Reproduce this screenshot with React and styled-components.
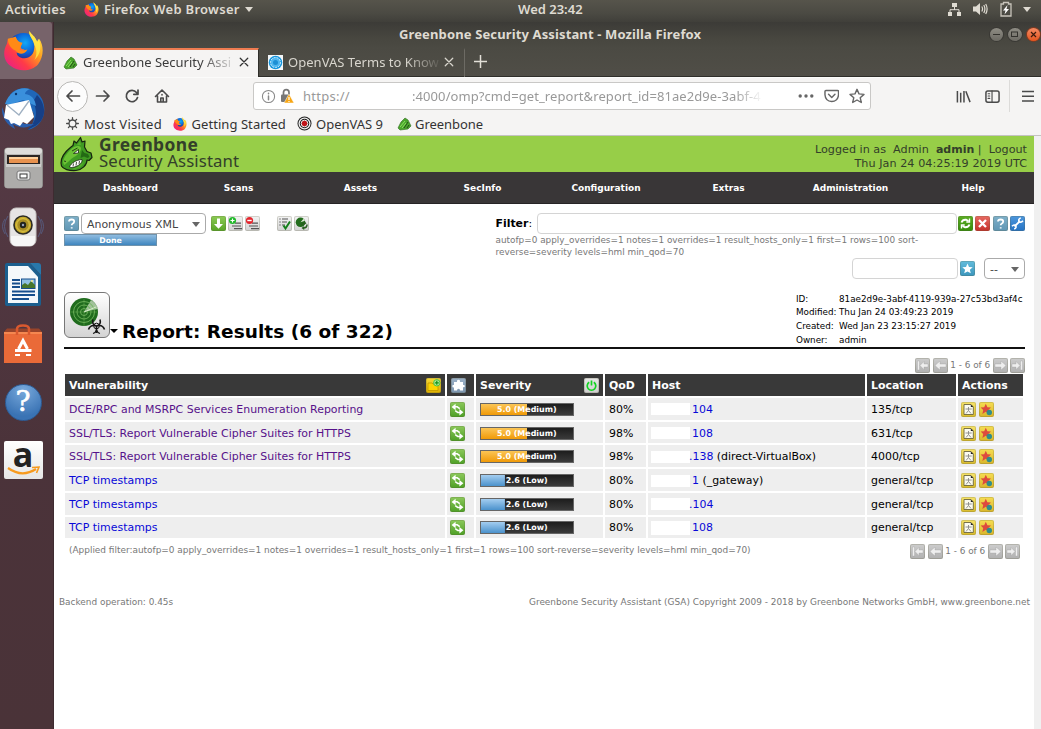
import React from 'react';
import styled, { createGlobalStyle } from 'styled-components';

const Global = createGlobalStyle`
  * { box-sizing: border-box; }
  body { margin: 0; background: #fff; font-family: "DejaVu Sans", sans-serif; overflow: hidden; }
  svg { display: block; flex: none; }
`;
const ui = '"Noto Sans", "Open Sans", sans-serif';

/* ---------- desktop shell ---------- */
const Desktop = styled.div`
  width: 1041px; height: 729px; display: flex; flex-direction: column; overflow: hidden;
`;
const TopBar = styled.header`
  height: 22px; flex: none; display: grid; grid-template-columns: 518px 1fr auto;
  background: linear-gradient(#56544b, #4b4a43 60%, #403f3a);
  color: #dfdbd2; font: 600 13px/18px ${ui}; padding-right: 10px; overflow: hidden;
`;
const TopLeft = styled.div`display: flex; padding-left: 5px; letter-spacing: 0.29px; white-space: nowrap;`;
const AppMenu = styled.div`display: flex; margin-left: 18px; gap: 5px; svg { margin-top: 2px; }`;
const Caret = styled.i`
  width: 0; height: 0; border: ${p => p.$s || 4}px solid transparent; border-bottom: 0;
  border-top: ${p => p.$h || 5}px solid ${p => p.$c || '#dfdbd2'}; flex: none; margin-top: ${p => p.$mt || 0}px;
`;
const Tray = styled.div`display: flex; align-items: flex-start; svg { margin-top: 1px; }`;
const TrayIcon = styled.span`display: block; margin-right: ${p => p.$r}px;`;
const Workspace = styled.div`flex: 1; display: flex; min-height: 0;`;
const Launcher = styled.nav`
  width: 54px; flex: none; display: flex; flex-direction: column; align-items: center; padding-right: 7px;
  background: linear-gradient(#523c43, #543944 20%, #4b333a 60%, #4a3338); border-right: 1px solid #3e2b30;
`;
const LaunchItem = styled.div`
  height: ${p => p.$h || 58.6}px; width: 100%; flex: none; display: flex; align-items: center; justify-content: center;
`;
const ActiveItem = styled(LaunchItem)`
  width: 52px; margin-right: -6px; padding-right: 5px; background: #77636a; border-radius: 0 3px 3px 0;
`;

/* ---------- browser window ---------- */
const Browser = styled.main`flex: 1; min-width: 0; display: flex; flex-direction: column; background: #fff;`;
const TitleBar = styled.div`
  height: 26px; flex: none; background: linear-gradient(#3c3b37, #47463f 60%, #4b4a43);
  display: grid; grid-template-columns: 345px 1fr auto; color: #dfdbd2;
  font: 700 13px/24px ${ui}; letter-spacing: 0.13px; white-space: nowrap;
`;
const WindowButtons = styled.div`display: flex; gap: 3px; padding-top: 5px;`;
const WinBtn = styled.span`
  width: 15.4px; height: 15px; border-radius: 50%; border: 1px solid ${p => (p.$close ? '#7d3b22' : '#3a3935')};
  background: ${p => (p.$close ? 'linear-gradient(#f58a63,#e4551f)' : 'linear-gradient(#8e8c84,#6c6a63)')};
  display: flex; align-items: center; justify-content: center;
`;
const TabStrip = styled.div`
  height: 29px; flex: none; display: flex; background: linear-gradient(#4b4a43, #504e47);
  border-bottom: 1px solid #2f2e2a; font: 400 13px/28px ${ui};
`;
const Tab = styled.div`
  width: ${p => (p.$active ? 205 : 206)}px; height: 29px; display: flex; align-items: center; padding: 0 9px 3px 9px;
  color: ${p => (p.$active ? '#3b3b3b' : '#d9d6ce')};
  background: ${p => (p.$active ? '#f5f4f3' : 'transparent')};
  border-top: 2px solid ${p => (p.$active ? '#ef7c51' : 'transparent')};
  border-right: 1px solid ${p => (p.$active ? '#2f2e2a' : '#6d6b64')};
`;
const TabTitle = styled.span`
  width: 155px; flex: none; margin-left: ${p => p.$ml}px; white-space: nowrap; letter-spacing: ${p => p.$ls || 0}px;
  mask-image: linear-gradient(90deg, #000 76%, transparent 100%);
`;
const NewTab = styled.div`padding: 7px 0 0 9px;`;
const NavBar = styled.div`
  height: 36px; flex: none; display: flex; align-items: center; background: #f5f4f3; border-top: 1px solid #fbfbfa; padding: 1px 7px 0 3px;
`;
const BackButton = styled.span`
  width: 31px; height: 31px; border: 1px solid #b9b8b6; border-radius: 50%; background: #fcfcfc; display: flex; align-items: center; justify-content: center;
`;
const NavIcons = styled.div`display: flex; align-items: center; gap: 13.4px; padding-left: 7px; width: 165px;`;
const UrlBar = styled.div`
  width: 618px; height: 28px; display: flex; align-items: center; background: #fff; border: 1px solid #c9c8c6; border-radius: 3px;
  color: #999; font: 400 13px/26px ${ui}; padding: 0 5px 0 7px; white-space: nowrap;
`;
const LockIcon = styled.span`margin-left: 2px;`;
const Scheme = styled.span`width: 109px; margin-left: 8px; letter-spacing: 0.27px;`;
const Path = styled.span`
  width: 351px; flex: none; letter-spacing: 0.08px; mask-image: linear-gradient(90deg, #000 92%, transparent 100%);
`;
const UrlActions = styled.div`display: flex; align-items: center; gap: 10px; margin-left: auto;`;
const RightTools = styled.div`display: flex; align-items: center; margin-left: auto; height: 100%;`;
const ToolGap = styled.span`width: 14px;`;
const ToolDivider = styled.span`width: 1px; height: 32px; background: #dcdbd9; margin: 0 12px 0 9px;`;
const Bookmarks = styled.div`
  height: 23px; flex: none; display: flex; background: #f5f4f3; border-bottom: 1px solid #c4c3c0; padding-left: 12px;
  font: 400 13px/20px ${ui}; color: #333; white-space: nowrap;
`;
const Bookmark = styled.div`display: flex; align-items: center; gap: ${p => p.$g || 4}px; width: ${p => p.$w}px; letter-spacing: ${p => p.$ls || 0}px; height: 21px;`;

/* ---------- Greenbone page ---------- */
const Viewport = styled.section`flex: 1; min-height: 0; display: flex;`;
const Page = styled.div`width: 980px; flex: none; background: #fff; color: #000; font-size: 10.9px;`;
const ScrollTrack = styled.div`flex: 1; background: #f0f0f0;`;
const Banner = styled.div`height: 36px; display: flex; background: #97ce48; padding: 0 7px 0 6px;`;
const Brand = styled.div`font-family: "Noto Sans", sans-serif; color: #33402a; margin-left: 5px; line-height: 17px; white-space: nowrap;`;
const BrandName = styled.div`font-size: 17.4px; font-weight: 700; letter-spacing: .4px; height: 16px; line-height: 16px;`;
const BrandSub = styled.div`font-size: 16.8px; letter-spacing: .1px;`;
const Session = styled.div`margin-left: auto; text-align: right; font-size: 11.2px; line-height: 14px; padding-top: 7px; color: #33402a; white-space: pre;`;
const LoginLine = styled.div`b { font-size: 11px; }`;
const Clock = styled.div`letter-spacing: .05px;`;
const Menu = styled.nav`
  height: 32px; display: flex; background: #393637; color: #fff; font: 700 9px/32px "DejaVu Sans", sans-serif; padding: 0 0 0 15px; border-bottom: 1px solid #262425;
`;
const MenuItem = styled.span`width: ${p => p.$w}px; text-align: center; padding-left: 1px;`;
const Body = styled.div`padding: 9px 9px 0 10px;`;
const Controls = styled.div`display: flex; height: 86px; align-items: flex-start;`;
const LeftControls = styled.div`width: 431.5px;`;
const IconRow = styled.div`display: flex; align-items: center; height: 21px;`;
const Select = styled.div`
  width: ${p => p.$w}px; height: 21px; border: 1px solid #aaa; border-radius: 4px; background: #fff; color: #444;
  display: flex; align-items: center; justify-content: space-between; padding: 1px 5px 0; margin: 0 ${p => p.$mr || 0}px 0 ${p => p.$ml}px; font-size: 10.95px;
`;
const IconGap = styled.span`width: ${p => p.$w}px;`;
const Done = styled.div`
  width: 93px; height: 12px; border: 1px solid #6f93ad; background: linear-gradient(#8fbce0, #3f86bf);
  color: #fff; font: 700 7.8px/11px "DejaVu Sans", sans-serif; text-align: center;
`;
const FilterPanel = styled.div`flex: 1;`;
const FilterLabel = styled.span`font-size: 10.9px; width: 41px; flex: none; b { font-size: 10.9px; }`;
const Input = styled.div`width: ${p => p.$w}px; height: 21px; flex: none; border: 1px solid #d4d4d4; border-radius: 4px; background: #fff; margin-right: ${p => p.$mr || 1}px;`;
const FilterText = styled.div`font-size: 8.9px; line-height: 12px; color: #777; height: 24px; white-space: nowrap;`;
const SavedFilters = styled(IconRow)`justify-content: flex-end;`;
const TitleRow = styled.div`display: flex; height: 57px; align-items: flex-start; border-bottom: 2px solid #111; margin-top: -7px;`;
const TitleBox = styled.div`display: flex; align-items: flex-end; flex: 1;`;
const ReportBadge = styled.div`
  width: 46px; height: 46px; border: 1px solid #777; border-radius: 6px; background: linear-gradient(#fff, #d4d4d4); padding: 2px;
`;
const CaretSlot = styled.span`padding-bottom: 5px;`;
const Heading = styled.h1`margin: 0 0 -5px 4px; font: 700 18.5px/22px "DejaVu Sans", sans-serif; letter-spacing: .03px;`;
const Meta = styled.dl`
  margin: 0; width: 229px; display: grid; grid-template-columns: 43px 1fr; font-size: 8.8px; line-height: 13.7px; white-space: nowrap; padding-top: .5px;
  dd, dt { margin: 0; }
`;
const Pager = styled.div`display: flex; align-items: center; justify-content: flex-end; gap: 2.4px; font-size: 8.9px; color: #777; white-space: nowrap; margin-right: ${p => p.$r || 0}px; height: 16px;`;
const TopPager = styled.div`padding-top: 8px;`;
const Grid = styled.div`
  display: grid; grid-template-columns: 380px 27px 127px 41px 217px 89px 65px; column-gap: 2px; row-gap: 2px; margin: 1px 0 0 1px;
  grid-template-rows: 22px; grid-auto-rows: 21.73px;
`;
const Head = styled.div`
  background: #393939; color: #fff; font-weight: 700; font-size: 10.95px; display: flex; align-items: center; justify-content: space-between; padding: 0 4px;
`;
const Cell = styled.div`
  background: #eee; display: flex; align-items: center; padding: 1px ${p => (p.$icon ? 3 : 4)}px 0; font-size: 10.95px; white-space: pre; gap: 2px; min-width: 0;
`;
const Link = styled.a`color: ${p => (p.$visited ? '#56118a' : '#0808d8')};`;
const Redacted = styled.span`width: 39px; height: ${p => p.$h || 12}px; background: #fff; margin-right: ${p => p.$r}px; margin-left: -1px;`;
const Bar = styled.div`
  width: 93.5px; height: 13px; border: 1px solid #666; color: #fff; font: 700 7.95px/12px "DejaVu Sans", sans-serif; text-align: center;
  background: ${p => (p.$low ? 'linear-gradient(#a3cdf0, #4b92cc)' : 'linear-gradient(#fbc556, #f09a08)')} 0 0 / ${p => (p.$low ? '26%' : '50%')} 100% no-repeat,
    linear-gradient(#1d1d1d, #3a3a3a);
`;
const Below = styled.div`display: flex; justify-content: space-between; font-size: 8.93px; color: #777; padding: 5px 0 0 5px; height: 58px; line-height: 15px; white-space: nowrap;`;
const Footer = styled.footer`display: flex; justify-content: space-between; padding: 0 4px 0 5px; font-size: 8.93px; color: #777; line-height: 13px; white-space: nowrap;`;

/* ---------- drawings ---------- */
const Firefox = ({ s }) => (
  <svg width={s} height={s} viewBox="0 0 42 42">
    <defs>
      <linearGradient id="fx" x1="1" y1="0" x2="0" y2="1"><stop offset="0" stopColor="#fff44a" /><stop offset=".38" stopColor="#ff9b1e" /><stop offset=".65" stopColor="#ff3b47" /><stop offset="1" stopColor="#e3169a" /></linearGradient>
      <radialGradient id="fb" cx=".55" cy=".3"><stop offset="0" stopColor="#12a9f5" /><stop offset=".6" stopColor="#0a63d8" /><stop offset="1" stopColor="#2b2d8a" /></radialGradient>
    </defs>
    <circle cx="21" cy="20" r="17" fill="url(#fb)" />
    <path fill="url(#fx)" d="M27 1C26 6 31 9 32 15C33 24 28 29 22 29C17 29 14 26 14 23C17 24 20 23 22 20C18 20 17 17 19 14C16 13 14 11 13 7C11 8 10 9 9 11L5 9L4 14C-1 23 1 32 8 37C17 44 30 42 36 35C42 27 42 16 37 9L35 12C33 6 29 5 27 1Z" />
    <path fill="#fff04a" opacity=".75" d="M27 1C26 6 31 9 32 15C35 20 35 26 32 31C39 25 40 15 36 9L35 12C33 6 29 5 27 1Z" />
    <path fill="#ff8a16" d="M5 9L13 7C14 11 17 13 20 13L17 20C20 22 23 20 25 20C22 26 15 25 13 21C9 20 5 15 5 9Z" />
  </svg>
);
const Thunderbird = () => (
  <svg width="45" height="44" viewBox="0 0 45 44">
    <path fill="#1f66b8" d="M9 8C16-2 34-1 41 12C47 26 41 39 27 43C33 36 34 31 32 25L10 18Z" />
    <path fill="#163f86" d="M36 8C46 18 46 34 32 40L26 43C36 35 37 24 32 15Z" />
    <path fill="#3a90dc" d="M4 17C8 4 20-1 29 2C26 3 24 5 24 7C31 8 34 12 35 19L22 13L8 18Z" />
    <path fill="#2a5fae" d="M1 20C0 30 6 38 14 42L12 37C18 41 26 42 33 37L24 37L5 30Z" />
    <path fill="#fff" d="M5 18L28 13L33 30L26 37L22 35L19 39L13 36L10 37L8 33L3 31Z" />
    <path d="M6 18L18 28L28 14" fill="none" stroke="#9fb0c2" strokeWidth="1.300" />
    <circle cx="15" cy="7" r="1.200" fill="#0b376f" />
  </svg>
);
const Files = () => (
  <svg width="39" height="42" viewBox="0 0 39 42">
    <rect x=".5" y="1" width="38" height="40" rx="3" fill="#b9b8b6" stroke="#8e8c8a" />
    <rect x="1" y="1" width="37" height="6" rx="3" fill="#dddcda" />
    <path fill="#2b2523" d="M3 8H36V18H3Z" /><path fill="#e8924f" d="M5 11H34V16H5Z" /><path fill="#fdd09c" d="M5 10H34V12H5Z" />
    <rect x="1" y="17" width="37" height="24" rx="2" fill="#adacaa" /><path fill="#cfcecc" d="M2 17H37V20H2Z" />
    <rect x="13" y="24" width="13" height="9" rx="2" fill="#eee" stroke="#777" /><rect x="16" y="27" width="7" height="4" fill="#fff" stroke="#333" />
  </svg>
);
const Speaker = () => (
  <svg width="44" height="42" viewBox="0 0 44 42">
    <path d="M7 10Q0 20 7 31M37 10Q44 20 37 31M4 13Q-1 20 4 28M40 13Q45 20 40 28" fill="none" stroke="#575a7c" strokeWidth="1" />
    <rect x="9" y="2" width="26" height="38" rx="6" fill="#e6e4e4" stroke="#c9c6c5" /><path d="M10 30H34V34Q34 40 28 40H16Q10 40 10 34Z" fill="#f6f6f6" />
    <circle cx="22" cy="19" r="9.800" fill="#2b2b24" /><circle cx="22" cy="19" r="8.200" fill="#c7aa2b" /><circle cx="22" cy="19" r="6.300" fill="#a88d24" stroke="#dcc549" /><circle cx="22" cy="19" r="3.200" fill="#20221d" /><circle cx="22" cy="19" r="1.200" fill="#9aa5bd" />
  </svg>
);
const Writer = () => (
  <svg width="38" height="44" viewBox="0 0 38 44">
    <path fill="#1b5f8f" d="M3 0H26L37 12V41Q37 43 35 43H3Q1 43 1 41V2Q1 0 3 0Z" />
    <path fill="#f4f8fb" d="M4 3H24L34 14V40H4Z" /><path fill="#2878ab" d="M26 0L37 12V3Q37 0 34 0Z" />
    <path d="M8 17H16M8 20.500H16M8 24H16M8 28.500H31M8 32H31M8 36H25" stroke="#174f8d" strokeWidth="2" />
    <rect x="17.500" y="16" width="13.500" height="9.500" fill="#8fc0e2" stroke="#174f8d" /><path fill="#48762b" d="M18 25V22L21 20L24 22L27 18L31 22V25Z" /><circle cx="28" cy="18" r="1" fill="#ffe88a" />
  </svg>
);
const Software = () => (
  <svg width="40" height="40" viewBox="0 0 40 40">
    <path fill="#b84a22" d="M4 4.500H36L39 8V39H1V8Z" opacity=".7" /><path fill="#ea6a38" d="M1 8H39V39H1Z" /><path fill="#f58750" d="M1 8H39V10H1Z" />
    <path d="M14 11V5Q14 1.500 20 1.500Q26 1.500 26 5V11" fill="none" stroke="#d9592f" strokeWidth="2.500" />
    <path d="M15.500 25L20 16.500L24.500 25" fill="none" stroke="#fff" strokeWidth="3" /><path d="M12 26.500H28.500" stroke="#fff" strokeWidth="3" /><path d="M12 31H17M23 31H28" stroke="#fff" strokeWidth="2.200" />
  </svg>
);
const HelpBall = styled.span`
  width: 37px; height: 37px; border-radius: 50%; background: radial-gradient(circle at 50% 15%, #78a9dc, #3a73b4 75%); border: 1px solid #2d5d97;
  color: #fff; font: 400 28px/34px "DejaVu Serif", serif; text-align: center; -webkit-text-stroke: .6px #fff;
`;
const Amazon = styled.span`
  width: 39px; height: 38px; border-radius: 2px; background: linear-gradient(#fff, #e6e6e6); color: #222; display: flex; flex-direction: column; align-items: center;
  font: 700 34px/26px "Open Sans", sans-serif; svg { margin-top: -1px; }
`;
const Dragon = () => (
  <svg width="34" height="36" viewBox="0 0 34 36">
    <path fill="#3f9a22" stroke="#16240f" strokeWidth="1.200" strokeLinejoin="round" d="M1 27C1 21 6 15 11 11L13 9.500L14 5L16.500 7L20.500 1.500L22 6L25 5L24.500 11L27 15.500L31 17L32 21.500L29 24.500L27 24C27 29 22 34 16 34.500C9 35 3 33 1.500 30Z" />
    <path fill="#6cc234" d="M3 26C4 21 8 15 14 11C17 9.500 20 9.500 21 12C21 16 18 19 14 21C10 23 7 28 4 29Z" />
    <path fill="#57b02c" d="M20 5L21 9L17 9ZM12 33C17 33.500 22 31 24 26L18 31Z" />
    <path fill="#236a14" d="M22 14L24.500 17L28 18L29.500 21L27.500 22L24 20.500L20.500 22Z" />
    <path fill="#fff" stroke="#16240f" strokeWidth=".8" d="M9.500 31C11 27 16 24 22 23.500C22.500 26 20 29 16 30.500C13 31.800 11 32 9.500 31Z" />
    <path fill="#fff" stroke="#16240f" strokeWidth=".8" d="M13.500 17.500L18.500 13.500L18.500 17Z" />
    <path d="M13 30.500L13.500 27.500M16 29.500L16.500 26M19 28L19.500 25M4 25L6 25.500M12 15L17.500 12" stroke="#16240f" strokeWidth=".8" />
  </svg>
);
const SmallDragon = () => (
  <svg width="15" height="15" viewBox="0 0 15 15">
    <path fill="#4aa52c" stroke="#2f6a1c" strokeWidth=".6" d="M1 12L4 6L8 2L11 4L13 8L14 10L11 13L3 14Z" />
    <path d="M7 12L11 6M10 12L12 9" stroke="#1e4413" strokeWidth=".9" /><path d="M3 11L8 5M5 12L9 7" stroke="#8be05e" strokeWidth="1" />
  </svg>
);
const Stroke = ({ s = 16, w = 1.7, c = '#4a4a4a', cap = 'round', children }) => (
  <svg width={s} height={s} viewBox="0 0 16 16" fill="none" stroke={c} strokeWidth={w} strokeLinecap={cap} strokeLinejoin="round">{children}</svg>
);
const Close = ({ c }) => <Stroke s={12} w={1.7} c={c}><path d="M3 3L13 13M13 3L3 13" /></Stroke>;

const iconPaint = {
  help: ['#7fb0c9', '#5f96b4'], download: ['#8ccb55', '#58a426'], plain: ['#f4f4f4', '#d2d2d2'], refresh: ['#5cae25', '#348c0b'],
  remove: ['#e86b63', '#c4302a'], wrench: ['#4d97dc', '#2472c4'], star: ['#63bcdc', '#3b96bd'], grey: ['#cdcdcd', '#b0b0b0'],
  folder: ['#f7d838', '#dfb100'], puzzle: ['#9db2c8', '#7b94ae'], power: ['#e6e6e6', '#cfcfcf'], swap: ['#8cc95b', '#4d9f25'],
  note: ['#f6e36a', '#d9bb2c'], override: ['#f6dd52', '#d9b52a'],
};
const Chip = styled.span`
  width: 15px; height: 15px; flex: none; border-radius: 2px; margin-right: ${p => p.$r || 0}px;
  background: linear-gradient(${p => iconPaint[p.$k][0]}, ${p => iconPaint[p.$k][1]}); box-shadow: inset 0 0 0 1px rgba(90, 90, 60, .22);
`;
const art = {
  help: <path d="M5 5.600Q5 3.500 7.600 3.500Q10.200 3.500 10.200 5.500Q10.200 6.900 8.600 7.700Q7.700 8.200 7.700 9.300M7.700 11.300V12.500" stroke="#fff" strokeWidth="1.800" fill="none" />,
  download: <path fill="#fff" d="M6 2.500H9V8H12L7.500 12.800L3 8H6Z" />,
  add: <g><path d="M7 7.200H13M4 10H13M6 12.600H14" stroke="#555" strokeWidth="1.200" /><circle cx="4.500" cy="4.500" r="3.600" fill="#20b82a" /><path d="M4.500 2.500V6.500M2.500 4.500H6.500" stroke="#fff" strokeWidth="1.200" /></g>,
  sub: <g><path d="M7 7.200H13M4 10H13M6 12.600H14" stroke="#555" strokeWidth="1.200" /><circle cx="4.500" cy="4.500" r="3.600" fill="#e3262e" /><path d="M2.300 4.500H6.700" stroke="#fff" strokeWidth="1.400" /></g>,
  check: <g><path d="M5 3H11M5 6H10M5 9H8" stroke="#555" strokeWidth="1.200" /><path d="M2.500 3H3.500M2.500 6H3.500M2.500 9H3.500" stroke="#222" strokeWidth="1.200" /><path d="M6.500 9.500L8.500 12.500L13 5.500" stroke="#15801c" strokeWidth="2" fill="none" /></g>,
  scan: <g><circle cx="6.500" cy="6.300" r="4.800" fill="#236c1d" /><path fill="#e0ecd8" d="M6.500 6.300L9.500 2.800L11 4.800Z" /><path d="M7.500 9.500Q8 7 10.500 7.200M13 8.500Q13 12 9.500 12" stroke="#285f1f" strokeWidth="1.500" fill="none" /><path fill="#285f1f" d="M10 5.300L12.500 7.200L10 9ZM10.200 10L7.500 12L10.200 14Z" /></g>,
  refresh: <g fill="none" stroke="#fff" strokeWidth="1.900"><path d="M3.500 6.500Q4.500 3.400 8 3.700L10.500 5M11.500 8.500Q10.500 11.600 7 11.300L4.500 10" /><path d="M11.500 2.600V6H8.300M3.500 12.400V9H6.700" strokeWidth="1.400" /></g>,
  remove: <path d="M4 4L11 11M11 4L4 11" stroke="#fff" strokeWidth="2.300" />,
  wrench: <g fill="none" stroke="#fff"><path d="M4.500 10.500L10 5" strokeWidth="1.900" /><path d="M10.800 1.900Q8 3 9 5.300Q10.500 7.300 13 4.900M4.200 13Q6.800 12 5.800 9.800Q4.300 7.900 2 10.300" strokeWidth="1.500" /></g>,
  star: <path fill="#fff" d="M7.500 2.500L9 6L12.700 6.300L9.900 8.700L10.800 12.300L7.500 10.400L4.200 12.300L5.100 8.700L2.300 6.300L6 6Z" />,
  first: <path fill="#eee" stroke="#999" strokeWidth=".3" d="M2.500 3H4.500V12H2.500ZM5 7.500L9 3.500V6H13V9H9V11.500Z" />,
  prev: <path fill="#eee" stroke="#999" strokeWidth=".3" d="M2 7.500L7 3V6H13V9H7V12Z" />,
  next: <path fill="#eee" stroke="#999" strokeWidth=".3" d="M13 7.500L8 3V6H2V9H8V12Z" />,
  last: <path fill="#eee" stroke="#999" strokeWidth=".3" d="M12.500 3H10.500V12H12.500ZM10 7.500L6 3.500V6H2V9H6V11.500Z" />,
  folder: <g><path fill="#fdd400" stroke="#b98f00" strokeWidth=".7" d="M2 5H6L7 6H12V12.500H2Z" /><circle cx="10.800" cy="4.800" r="3.200" fill="#b5e89a" stroke="#2dbf35" strokeWidth=".8" /><path d="M10.800 2.800V6.800M8.800 4.800H12.800" stroke="#12931c" strokeWidth="1.200" /></g>,
  puzzle: <path fill="#fff" d="M3 4H6Q5.500 1.800 7.500 1.800Q9.500 1.800 9 4H12V7Q13.800 6.500 13.800 8Q13.800 9.700 12 9V12.500H9Q9.200 10.800 7.500 10.800Q6 10.800 6 12.500H3V9.500Q1.300 9.700 1.300 8Q1.300 6.500 3 7Z" />,
  power: <path d="M5.200 4.300A4.300 4.300 0 1 0 9.800 4.300M7.500 2.500V7.500" fill="none" stroke="#12d322" strokeWidth="1.700" />,
  swap: <g><path fill="#fff" d="M1.600 5L5.600 1.800V8.200ZM13.400 10.200L9.400 7V13.400Z" /><path d="M5 4.800H7.200L9.800 6.600M10 10.400H7.800L5.200 8.700" fill="none" stroke="#fff" strokeWidth="1.500" /></g>,
  note: <g><path fill="#fbfbef" stroke="#6b6540" strokeWidth=".9" d="M3 2.500H10L12.300 5V12.500H3Z" /><path d="M7.500 5V8.500L5 11.500M7.500 8.500L10 11.500M4.500 7H10.700" stroke="#888" strokeWidth=".9" fill="none" /><path fill="#222" d="M9.800 2.500L12.300 5H9.800Z" /></g>,
  override: <g><path fill="#dd4a3e" d="M6.800 1.800L8.400 5.300L12 5.600L9.400 8L10.200 12L6.800 9.800L3.400 12L4.200 8L1.600 5.600L5.200 5.300Z" /><circle cx="10.300" cy="10.500" r="2.700" fill="#2f8c8c" /></g>,
};
const GsaIcon = ({ k, paint, r }) => (
  <Chip $k={paint || k} $r={r}><svg width="15" height="15" viewBox="0 0 15 15">{art[k]}</svg></Chip>
);
const Radar = () => (
  <svg width="42" height="42" viewBox="0 0 42 42">
    <circle cx="17" cy="17" r="14" fill="#1f6b1d" />
    <path fill="#cfe0c6" opacity=".75" d="M17 17L24 5Q30 9 31 14Z" />
    <g fill="none" stroke="#6fb35b" strokeWidth=".9"><circle cx="17" cy="17" r="10.500" /><circle cx="17" cy="17" r="7" /><circle cx="17" cy="17" r="3.500" /><path d="M17 4V31M3 17H30" opacity=".5" /></g>
    <path d="M17 17L29 12" stroke="#d7efca" />
    <g fill="none" stroke="#151515" strokeWidth="1.600"><path d="M26 24.500Q24.500 30 29.500 31Q34.500 30 33 24.500M29.500 31V38M29.500 31Q23.500 29 21.500 34.500M29.500 31Q35.500 29 37.500 34.500" /><path d="M26 38.500Q28.500 38 29.500 35Q30.500 38 33 38.500" strokeWidth="1.200" /><circle cx="29.500" cy="31" r="2.800" strokeWidth="1" /></g>
  </svg>
);
const PagerBar = ({ r }) => (
  <Pager $r={r}><GsaIcon k="first" paint="grey" /><GsaIcon k="prev" paint="grey" /><span>1 - 6 of 6</span><GsaIcon k="next" paint="grey" /><GsaIcon k="last" paint="grey" /></Pager>
);

const rows = [
  ['DCE/RPC and MSRPC Services Enumeration Reporting', 5, '80%', '104', '', '135/tcp', 1],
  ['SSL/TLS: Report Vulnerable Cipher Suites for HTTPS', 5, '98%', '108', '', '631/tcp', 1],
  ['SSL/TLS: Report Vulnerable Cipher Suites for HTTPS', 5, '98%', '.138', ' (direct-VirtualBox)', '4000/tcp', 0],
  ['TCP timestamps', 2.6, '80%', '1', ' (_gateway)', 'general/tcp', 1],
  ['TCP timestamps', 2.6, '80%', '.104', '', 'general/tcp', 0],
  ['TCP timestamps', 2.6, '80%', '108', '', 'general/tcp', 1],
];
const menu = [['Dashboard', 122], ['Scans', 94], ['Assets', 150], ['SecInfo', 94], ['Configuration', 153], ['Extras', 92], ['Administration', 152], ['Help', 93]];

export default function App() {
  return (
    <Desktop>
      <Global />
      <TopBar>
        <TopLeft>
          Activities
          <AppMenu><Firefox s={15} />Firefox Web Browser<Caret $mt={7} /></AppMenu>
        </TopLeft>
        <span>Wed 23:42</span>
        <Tray>
          <TrayIcon $r={11}><svg width="15" height="16" viewBox="0 0 15 16" fill="#dfdbd2"><path d="M5 2H10V6H5ZM1 11H5V15H1ZM10 11H14V15H10Z" /><path d="M7.500 6V9M3 11V8.700H12V11" fill="none" stroke="#dfdbd2" /></svg></TrayIcon>
          <TrayIcon $r={12}><svg width="15" height="16" viewBox="0 0 15 16"><path fill="#dfdbd2" d="M0 5.500H3L7 2V14L3 10.500H0Z" /><path d="M8.800 5.500Q10.300 8 8.800 10.500M10.800 4Q13 8 10.800 12M12.700 3Q15.500 8 12.700 13" fill="none" stroke="#dfdbd2" strokeWidth="1.200" /></svg></TrayIcon>
          <TrayIcon $r={11}><svg width="12" height="16" viewBox="0 0 12 16"><path d="M1 3H3.500V1.500H8.500V3H11V15H1Z" fill="none" stroke="#c9c5bc" strokeWidth="1.300" /><path fill="#fff" d="M7.500 4L3 9.500H5.500L4.500 13.500L9 8H6.500Z" /></svg></TrayIcon>
          <Caret $mt={7} />
        </Tray>
      </TopBar>
      <Workspace>
        <Launcher>
          <ActiveItem $h={57}><Firefox s={41} /></ActiveItem>
          <LaunchItem $h={60}><Thunderbird /></LaunchItem>
          <LaunchItem><Files /></LaunchItem>
          <LaunchItem><Speaker /></LaunchItem>
          <LaunchItem><Writer /></LaunchItem>
          <LaunchItem><Software /></LaunchItem>
          <LaunchItem><HelpBall>?</HelpBall></LaunchItem>
          <LaunchItem $h={57}>
            <Amazon>a<svg width="34" height="11" viewBox="0 0 34 11"><path d="M2 2Q16 12 30 3" fill="none" stroke="#f79a1e" strokeWidth="2.200" /><path d="M26 1.500L33 1L30.500 7" fill="none" stroke="#f79a1e" strokeWidth="1.600" /></svg></Amazon>
          </LaunchItem>
        </Launcher>
        <Browser>
          <TitleBar>
            <span />
            <span>Greenbone Security Assistant - Mozilla Firefox</span>
            <WindowButtons>
              <WinBtn><svg width="9" height="9"><path d="M1 4.500H8" stroke="#33322e" /></svg></WinBtn>
              <WinBtn><svg width="9" height="9"><rect x="1.500" y="2" width="6" height="4.500" fill="none" stroke="#33322e" /></svg></WinBtn>
              <WinBtn $close><svg width="9" height="9"><path d="M2 2L7 7M7 2L2 7" stroke="#3d1a0d" strokeWidth="1.200" /></svg></WinBtn>
            </WindowButtons>
          </TitleBar>
          <TabStrip>
            <Tab $active><SmallDragon /><TabTitle $ml={5}>Greenbone Security Assi</TabTitle><Close c="#333" /></Tab>
            <Tab>
              <svg width="15" height="15" viewBox="0 0 15 15"><path fill="#f3f6f8" d="M0 0H15V15H0Z" /><circle cx="7.500" cy="7.500" r="6.800" fill="#1595dd" /><circle cx="7.500" cy="7.500" r="5" fill="#4fb7f0" stroke="#fff" strokeWidth=".8" strokeDasharray="2 1" /><circle cx="7.500" cy="7.500" r="2.500" fill="#1d8fd4" /></svg>
              <TabTitle $ml={5} $ls={0.03}>OpenVAS Terms to Know</TabTitle><Close c="#d9d6ce" />
            </Tab>
            <NewTab><svg width="13" height="13"><path d="M6.500 0V13M0 6.500H13" stroke="#e3e0d8" strokeWidth="1.500" /></svg></NewTab>
          </TabStrip>
          <NavBar>
            <BackButton><Stroke><path d="M14.500 8H2M7 3L2 8L7 13" /></Stroke></BackButton>
            <NavIcons>
              <Stroke><path d="M1.500 8H14M9 3L14 8L9 13" /></Stroke>
              <Stroke><path d="M13.500 9.500A5.700 5.700 0 1 1 12.500 4.500L13.800 6M14 2V6.300H9.800" /></Stroke>
              <Stroke w={1.6}><path d="M1.500 8.500L8 2L14.500 8.500M3.500 8V14H12.500V8M6.800 14V10H9.200V14M8 6.500V7" /></Stroke>
            </NavIcons>
            <UrlBar>
              <Stroke s={15} w={1.1} c="#888"><circle cx="8" cy="8" r="6.500" /><path d="M8 7.500V11.500M8 4.500V5" strokeWidth="1.600" /></Stroke>
              <LockIcon>
                <svg width="17" height="16" viewBox="0 0 17 16">
                  <path d="M5.500 7V4.500Q5.500 1.700 8.300 1.700Q11 1.700 11 4.500V7" fill="none" stroke="#777" strokeWidth="1.700" /><rect x="3" y="6.500" width="8" height="7.500" rx="1" fill="#777" /><path fill="#f7a614" stroke="#fff" strokeWidth=".5" d="M11 6L16 15H6Z" /><path d="M11 9V12M11 13V14" stroke="#fff" strokeWidth="1.200" />
                </svg>
              </LockIcon>
              <Scheme>https://</Scheme>
              <Path>:4000/omp?cmd=get_report&amp;report_id=81ae2d9e-3abf-4</Path>
              <UrlActions>
                <svg width="16" height="4" fill="#666"><circle cx="2.200" cy="2" r="1.700" /><circle cx="8" cy="2" r="1.700" /><circle cx="13.800" cy="2" r="1.700" /></svg>
                <Stroke s={15.5} c="#666" w={1.5}><path d="M2 2.500H14Q15 2.500 15 3.500V7Q14.500 13.700 8 14Q1.500 13.700 1 7V3.500Q1 2.500 2 2.500ZM4.700 6.500L8 9.700L11.300 6.500" /></Stroke>
                <Stroke s={16} c="#666" w={1.4}><path d="M8 1.300L10 5.900L15 6.400L11.200 9.700L12.300 14.500L8 12L3.700 14.500L4.800 9.700L1 6.400L6 5.900Z" /></Stroke>
              </UrlActions>
            </UrlBar>
            <RightTools>
              <Stroke s={15} w={1.6} cap="butt"><path d="M1.500 2V14.500M5 4V14.500M8.500 2V14.500M10.500 2.500L15 14" /></Stroke>
              <ToolGap />
              <Stroke s={15} w={1.6}><rect x="1" y="2" width="14" height="12" rx="2" /><path d="M7.500 2V14M3.300 5H5M3.300 7.500H5M3.300 10H5" strokeWidth="1.200" /></Stroke>
              <ToolDivider />
              <svg width="12" height="13"><path d="M0 1.500H12M0 6.200H12M0 11H12" stroke="#4a4a4a" strokeWidth="1.600" /></svg>
            </RightTools>
          </NavBar>
          <Bookmarks>
            <Bookmark $w={107} $ls={0.27} $g={5}>
              <Stroke s={13} w={1.6}><circle cx="8" cy="8" r="4.300" /><path d="M8 .8V3M8 13V15.200M.8 8H3M13 8H15.200M3 3L4.500 4.500M11.500 11.500L13 13M3 13L4.500 11.500M11.500 4.500L13 3" /></Stroke>Most Visited
            </Bookmark>
            <Bookmark $w={124} $ls={0.06} $g={4.5}><Firefox s={14} />Getting Started</Bookmark>
            <Bookmark $w={100}>
              <svg width="15" height="15" viewBox="0 0 15 15"><circle cx="7.500" cy="7.500" r="7" fill="#222" /><circle cx="7.500" cy="7.500" r="5.400" fill="none" stroke="#eee" strokeWidth="1.300" /><circle cx="7.500" cy="7.500" r="3.300" fill="#c0151a" stroke="#eee" /></svg>OpenVAS 9
            </Bookmark>
            <Bookmark $w={100} $ls={-0.04} $g={3}><SmallDragon />Greenbone</Bookmark>
          </Bookmarks>
          <Viewport>
            <Page>
              <Banner>
                <Dragon />
                <Brand><BrandName>Greenbone</BrandName><BrandSub>Security Assistant</BrandSub></Brand>
                <Session><LoginLine>{'Logged in as  Admin  '}<b>admin</b>{' |  Logout'}</LoginLine><Clock>Thu Jan 24 04:25:19 2019 UTC</Clock></Session>
              </Banner>
              <Menu>{menu.map(([t, w]) => <MenuItem key={t} $w={w}>{t}</MenuItem>)}</Menu>
              <Body>
                <Controls>
                  <LeftControls>
                    <IconRow>
                      <GsaIcon k="help" /><Select $w={125} $ml={2} $mr={5}>Anonymous XML<Caret $c="#666" /></Select>
                      <GsaIcon k="download" r={2.2} /><GsaIcon k="add" paint="plain" r={2.2} /><GsaIcon k="sub" paint="plain" r={2.2} />
                      <IconGap $w={14.5} /><GsaIcon k="check" paint="plain" r={2.4} /><GsaIcon k="scan" paint="plain" />
                    </IconRow>
                    <Done>Done</Done>
                  </LeftControls>
                  <FilterPanel>
                    <IconRow>
                      <FilterLabel><b>Filter</b>:</FilterLabel><Input $w={420} $mr={1.5} />
                      <GsaIcon k="refresh" r={2.3} /><GsaIcon k="remove" r={2.3} /><GsaIcon k="help" r={2.3} /><GsaIcon k="wrench" />
                    </IconRow>
                    <FilterText>autofp=0 apply_overrides=1 notes=1 overrides=1 result_hosts_only=1 first=1 rows=100 sort-<br />reverse=severity levels=hml min_qod=70</FilterText>
                    <SavedFilters><Input $w={106} $mr={2} /><GsaIcon k="star" r={4} /><Select $w={41} $ml={5}>--<Caret $c="#666" /></Select></SavedFilters>
                  </FilterPanel>
                </Controls>
                <TitleRow>
                  <TitleBox><ReportBadge><Radar /></ReportBadge><CaretSlot><Caret as="div" $c="#000" $h={4} /></CaretSlot><Heading>Report: Results (6 of 322)</Heading></TitleBox>
                  <Meta>
                    <dt>ID:</dt><dd>81ae2d9e-3abf-4119-939a-27c53bd3af4c</dd>
                    <dt>Modified:</dt><dd>Thu Jan 24 03:49:23 2019</dd>
                    <dt>Created:</dt><dd>Wed Jan 23 23:15:27 2019</dd>
                    <dt>Owner:</dt><dd>admin</dd>
                  </Meta>
                </TitleRow>
                <TopPager><PagerBar /></TopPager>
                <Grid>
                  <Head>Vulnerability<GsaIcon k="folder" /></Head>
                  <Head><GsaIcon k="puzzle" /></Head>
                  <Head>Severity<GsaIcon k="power" /></Head>
                  <Head>QoD</Head><Head>Host</Head><Head>Location</Head><Head>Actions</Head>
                  {rows.map(([name, sev, qod, host, alias, loc, gap], i) => (
                    <React.Fragment key={i}>
                      <Cell><Link $visited={sev === 5}>{name}</Link></Cell>
                      <Cell $icon><GsaIcon k="swap" /></Cell>
                      <Cell><Bar $low={sev < 4}>{sev === 5 ? '5.0 (Medium)' : '2.6 (Low)'}</Bar></Cell>
                      <Cell>{qod}</Cell>
                      <Cell><Redacted $r={gap ? 0 : -3} $h={i === 5 ? 14 : 12} /><span><Link>{host}</Link>{alias}</span></Cell>
                      <Cell>{loc}</Cell>
                      <Cell $icon><GsaIcon k="note" r={0.5} /><GsaIcon k="override" /></Cell>
                    </React.Fragment>
                  ))}
                </Grid>
                <Below>
                  <span>(Applied filter:autofp=0 apply_overrides=1 notes=1 overrides=1 result_hosts_only=1 first=1 rows=100 sort-reverse=severity levels=hml min_qod=70)</span>
                  <PagerBar r={5} />
                </Below>
              </Body>
              <Footer><span>Backend operation: 0.45s</span><span>Greenbone Security Assistant (GSA) Copyright 2009 - 2018 by Greenbone Networks GmbH, www.greenbone.net</span></Footer>
            </Page>
            <ScrollTrack />
          </Viewport>
        </Browser>
      </Workspace>
    </Desktop>
  );
}
